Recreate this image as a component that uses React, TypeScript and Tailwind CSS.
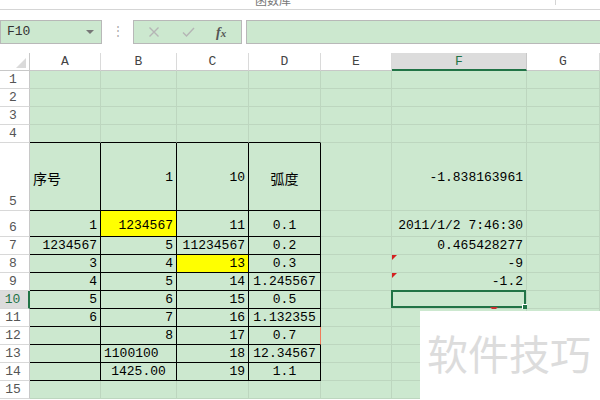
import React from 'react'

type Cell = {
  t?: string
  a?: 'l' | 'r' | 'c'
  yellow?: boolean
  cjk?: boolean
  flag?: boolean
}

const COLS = ['A', 'B', 'C', 'D', 'E', 'F', 'G']
const HEIGHTS = [18, 18, 18, 18, 68, 26, 18, 18, 18, 18, 18, 18, 18, 18, 18]

const DATA: Record<number, Record<string, Cell>> = {
  5: {
    A: { t: '序号', a: 'l', cjk: true },
    B: { t: '1', a: 'r' },
    C: { t: '10', a: 'r' },
    D: { t: '弧度', a: 'c', cjk: true },
    F: { t: '-1.838163961', a: 'r' },
  },
  6: {
    A: { t: '1', a: 'r' },
    B: { t: '1234567', a: 'r', yellow: true },
    C: { t: '11', a: 'r' },
    D: { t: '0.1', a: 'c' },
    F: { t: '2011/1/2 7:46:30', a: 'r' },
  },
  7: {
    A: { t: '1234567', a: 'r' },
    B: { t: '5', a: 'r' },
    C: { t: '11234567', a: 'r' },
    D: { t: '0.2', a: 'c' },
    F: { t: '0.465428277', a: 'r' },
  },
  8: {
    A: { t: '3', a: 'r' },
    B: { t: '4', a: 'r' },
    C: { t: '13', a: 'r', yellow: true },
    D: { t: '0.3', a: 'c' },
    F: { t: '-9', a: 'r', flag: true },
  },
  9: {
    A: { t: '4', a: 'r' },
    B: { t: '5', a: 'r' },
    C: { t: '14', a: 'r' },
    D: { t: '1.245567', a: 'c' },
    F: { t: '-1.2', a: 'r', flag: true },
  },
  10: {
    A: { t: '5', a: 'r' },
    B: { t: '6', a: 'r' },
    C: { t: '15', a: 'r' },
    D: { t: '0.5', a: 'c' },
  },
  11: {
    A: { t: '6', a: 'r' },
    B: { t: '7', a: 'r' },
    C: { t: '16', a: 'r' },
    D: { t: '1.132355', a: 'c' },
  },
  12: {
    B: { t: '8', a: 'r' },
    C: { t: '17', a: 'r' },
    D: { t: '0.7', a: 'c' },
  },
  13: {
    B: { t: '1100100', a: 'l' },
    C: { t: '18', a: 'r' },
    D: { t: '12.34567', a: 'c' },
  },
  14: {
    B: { t: '1425.00', a: 'c' },
    C: { t: '19', a: 'r' },
    D: { t: '1.1', a: 'c' },
  },
}

const inTable = (r: number, c: number) => r >= 5 && r <= 14 && c <= 3

function GridCell({ r, c }: { r: number; c: number }) {
  const col = COLS[c]
  const cell = DATA[r]?.[col] ?? {}
  const blackRight = inTable(r, c)
  const blackBottom = inTable(r, c) || (r === 4 && c <= 3)
  const selected = r === 10 && col === 'F'

  let right = blackRight ? 'border-r-black' : 'border-r-[#bdd6bf]'
  if (r === 12 && c === 3) right = 'border-r-[#f07a5a]'
  const bottom = blackBottom ? 'border-b-black' : 'border-b-[#bdd6bf]'
  const bg = cell.yellow ? 'bg-[#ffff00]' : 'bg-[#cce8cf]'
  const justify =
    cell.a === 'l' ? 'justify-start pl-[3px]' : cell.a === 'c' ? 'justify-center' : 'justify-end pr-[3px]'
  const valign = r === 5 ? 'items-center pt-[3px]' : r === 6 ? 'items-end pb-[3px]' : 'items-end pb-[1px]'

  return (
    <div
      className={`relative flex border-r border-b ${right} ${bottom} ${bg} ${justify} ${valign} whitespace-nowrap text-black`}
    >
      {cell.t && (
        <span
          className={
            cell.cjk
              ? "font-['Noto_Sans_CJK_SC',sans-serif] text-[14px] leading-[16px]"
              : "font-['Liberation_Mono',monospace] text-[13px] leading-[14px]"
          }
        >
          {cell.t}
        </span>
      )}
      {cell.flag && (
        <div className="absolute left-0 top-0 h-0 w-0 border-t-[5px] border-r-[5px] border-t-[#d42020] border-r-transparent" />
      )}
      {selected && (
        <>
          <div className="absolute -left-[1px] -top-[1px] right-0 bottom-0 border-2 border-[#217346]" />
          <div className="absolute -right-[2px] -bottom-[2px] h-[5px] w-[5px] bg-[#217346] outline outline-1 outline-white" />
          <div className="absolute left-[98px] -bottom-[3px] h-0 w-0 border-t-[4px] border-l-[4px] border-r-[4px] border-t-[#c83030] border-l-transparent border-r-transparent" />
        </>
      )}
    </div>
  )
}

export default function App() {
  return (
    <div className="relative h-[400px] w-[600px] overflow-hidden bg-white font-['Liberation_Mono',monospace]">
      {/* ribbon remnant */}
      <div className="relative h-[10px] border-b border-[#d5d5d5]">
        <div className="absolute left-[255px] -top-[8px] font-['Noto_Sans_CJK_SC',sans-serif] text-[12px] leading-[16px] text-[#777]">
          函数库
        </div>
        <div className="absolute left-[555px] top-0 h-[5px] w-px bg-[#d5d5d5]" />
      </div>

      {/* formula bar */}
      <div className="mt-[10px] flex h-[24px] items-stretch">
        <div className="flex w-[102px] items-center justify-between border border-[#b8b8b8] bg-[#cce8cf] pl-[6px] pr-[7px]">
          <span className="text-[13px] text-[#333]">F10</span>
          <div className="h-0 w-0 border-t-[4px] border-l-[4px] border-r-[4px] border-t-[#777] border-l-transparent border-r-transparent" />
        </div>
        <div className="flex w-[31px] items-center justify-center text-[12px] text-[#aaa]">⋮</div>
        <div className="flex w-[109px] items-center border border-[#b8b8b8] bg-[#cce8cf]">
          <svg width="12" height="12" viewBox="0 0 12 12" className="ml-[14px]">
            <path d="M1.5 1.5 L10.5 10.5 M10.5 1.5 L1.5 10.5" stroke="#b5b5b5" strokeWidth="1.4" />
          </svg>
          <svg width="13" height="12" viewBox="0 0 13 12" className="ml-[22px]">
            <path d="M1 6.5 L4.5 10 L12 2" stroke="#b5b5b5" strokeWidth="1.4" fill="none" />
          </svg>
          <span className="ml-[21px] font-['Liberation_Serif',serif] text-[14px] font-bold italic text-[#555]">
            f<span className="text-[11px]">x</span>
          </span>
        </div>
        <div className="ml-[4px] flex-1 border border-r-0 border-[#b8b8b8] bg-[#cce8cf]" />
      </div>

      {/* sheet */}
      <div className="mt-[9px] grid grid-cols-[30px_71px_76px_72px_72px_71px_135px_1fr]">
        {/* header row */}
        <div className="relative h-[18px] border-r border-b border-[#c8c8c8] bg-white">
          <svg width="10" height="10" viewBox="0 0 10 10" className="absolute right-[3px] bottom-[2px]">
            <path d="M10 0 L10 10 L0 10 Z" fill="#dadada" />
          </svg>
        </div>
        {COLS.map((c) => (
          <div
            key={c}
            className={`flex h-[18px] items-center justify-center text-[13px] leading-none ${
              c === 'F'
                ? 'border-r border-r-[#c8c8c8] border-b-2 border-b-[#217346] bg-[#dcdcdc] text-[#217346]'
                : 'border-r border-b border-r-[#dadada] border-b-[#c8c8c8] bg-white text-[#444]'
            }`}
          >
            {c}
          </div>
        ))}

        {HEIGHTS.map((h, i) => {
          const r = i + 1
          const sel = r === 10
          return (
            <React.Fragment key={r}>
              <div
                style={{ height: h }}
                className={`flex items-end justify-center pb-[1px] pr-[3px] text-[13px] leading-[14px] border-b border-b-[#d8d8d8] ${
                  sel
                    ? 'border-r-2 border-r-[#217346] bg-[#dcdcdc] text-[#217346]'
                    : 'border-r border-r-[#c8c8c8] bg-white text-[#555]'
                }`}
              >
                {r}
              </div>
              {COLS.map((_, c) => (
                <GridCell key={c} r={r} c={c} />
              ))}
            </React.Fragment>
          )
        })}
      </div>

      {/* watermark */}
      <div className="absolute left-[420px] top-[311px] right-0 bottom-0 bg-white pl-[7px] pt-[17px] font-['Noto_Sans_CJK_SC',sans-serif] text-[41px] leading-[48px] text-[#dcdcdc]">
        软件技巧
      </div>
    </div>
  )
}
